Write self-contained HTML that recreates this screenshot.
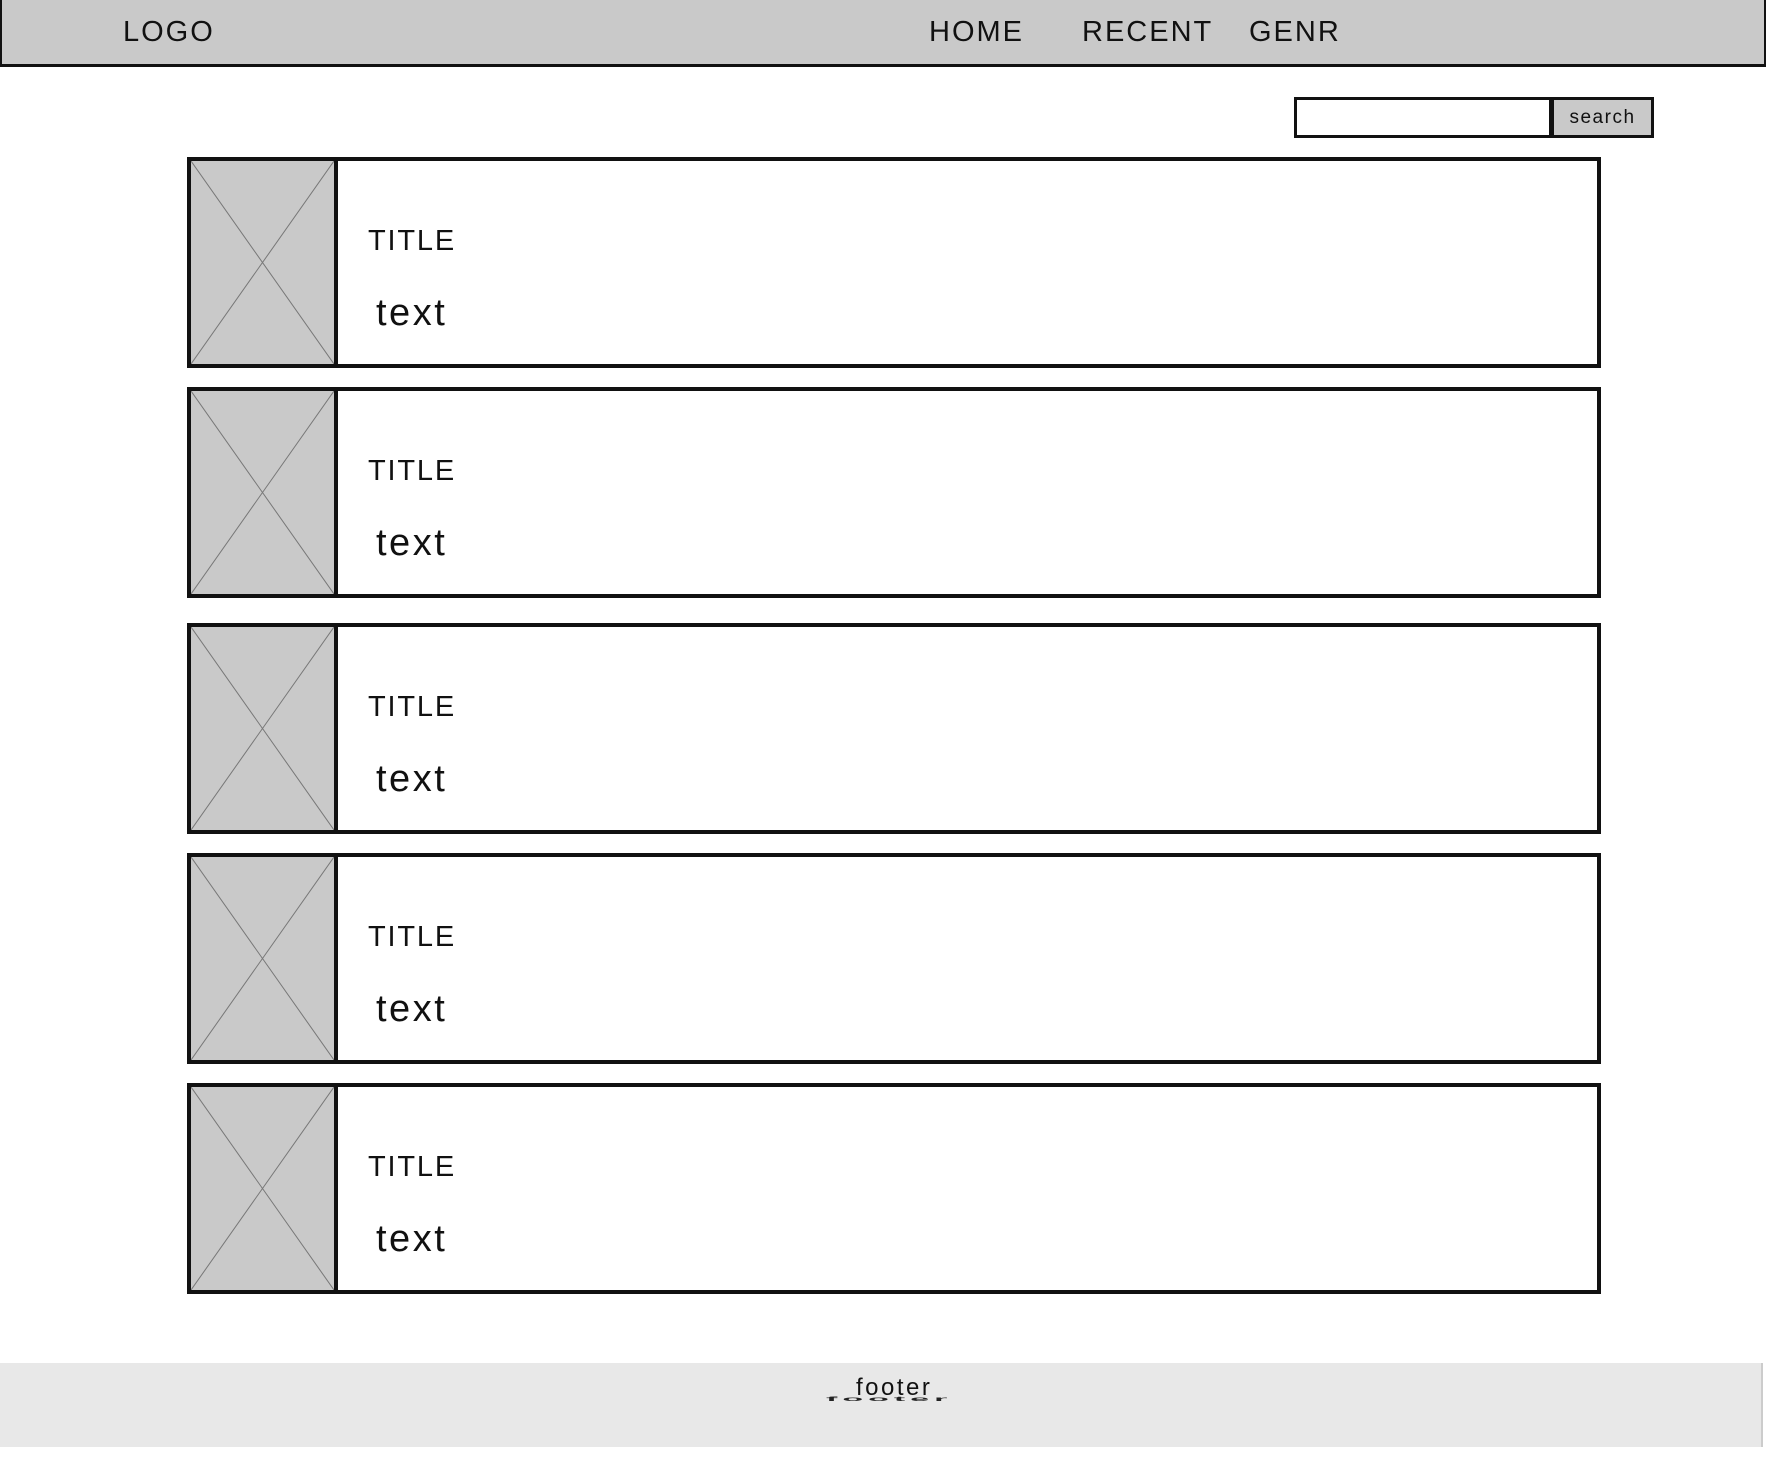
<!DOCTYPE html>
<html><head><style>
*{margin:0;padding:0;box-sizing:border-box}
body{width:1766px;height:1457px;background:#fff;position:relative;overflow:hidden;font-family:"Liberation Sans",sans-serif;color:#111}
.hdr{position:absolute;left:0;top:0;width:1766px;height:67px;background:#c9c9c9;border:2px solid #111;border-bottom:3px solid #111;border-top:0}
.t{position:absolute;white-space:nowrap}
.nav{font-size:29px;letter-spacing:2px;top:16px}
.inp{position:absolute;left:1294px;top:97px;width:258px;height:41px;border:3px solid #111;background:#fff}
.btn{position:absolute;left:1551px;top:97px;width:103px;height:41px;border:3px solid #111;background:#c9c9c9;font-size:19px;letter-spacing:1.5px;text-align:center;line-height:35px}
.card{position:absolute;left:187px;width:1414px;height:211px;border:4px solid #111}
.img{position:absolute;left:0;top:0;width:147px;height:100%;background:#c9c9c9;border-right:4px solid #111}
.img svg{position:absolute;left:0;top:0}
.title{position:absolute;left:177px;top:64px;font-size:29px;letter-spacing:1.8px}
.txt{position:absolute;left:185px;top:131px;font-size:38px;letter-spacing:2.5px}
.ftr{position:absolute;left:0;top:1363px;width:1763px;height:84px;background:#e8e8e8;border-right:2px solid #ccc}
</style></head><body>
<div class="hdr"></div>
<div class="t nav" style="left:123px">LOGO</div>
<div class="t nav" style="left:929px">HOME</div>
<div class="t nav" style="left:1082px">RECENT</div>
<div class="t nav" style="left:1249px">GENR</div>
<div class="inp"></div>
<div class="btn">search</div>

<div class="card" style="top:157px"><div class="img"><svg width="143" height="203"><path d="M0 0L143 203M143 0L0 203" stroke="#777" stroke-width="1"/></svg></div><div class="title">TITLE</div><div class="txt">text</div></div>
<div class="card" style="top:387px"><div class="img"><svg width="143" height="203"><path d="M0 0L143 203M143 0L0 203" stroke="#777" stroke-width="1"/></svg></div><div class="title">TITLE</div><div class="txt">text</div></div>
<div class="card" style="top:623px"><div class="img"><svg width="143" height="203"><path d="M0 0L143 203M143 0L0 203" stroke="#777" stroke-width="1"/></svg></div><div class="title">TITLE</div><div class="txt">text</div></div>
<div class="card" style="top:853px"><div class="img"><svg width="143" height="203"><path d="M0 0L143 203M143 0L0 203" stroke="#777" stroke-width="1"/></svg></div><div class="title">TITLE</div><div class="txt">text</div></div>
<div class="card" style="top:1083px"><div class="img"><svg width="143" height="203"><path d="M0 0L143 203M143 0L0 203" stroke="#777" stroke-width="1"/></svg></div><div class="title">TITLE</div><div class="txt">text</div></div>

<div class="ftr"></div>
<div class="t" style="left:856px;top:1374px;font-size:24px;letter-spacing:2.5px">footer</div>
<div class="t" style="left:826px;top:1395px;font-size:34px;letter-spacing:5px;transform:scaleY(0.2);transform-origin:top left;color:#222;font-weight:bold">footer</div>
</body></html>
